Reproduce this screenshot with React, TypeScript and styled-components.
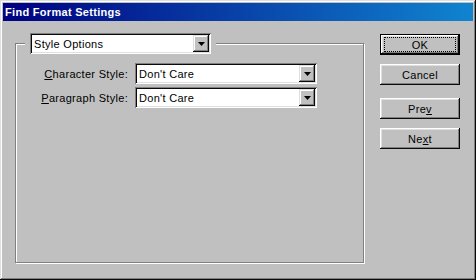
import React, { FC } from 'react'
import styled, { createGlobalStyle } from 'styled-components'

const GlobalStyle = createGlobalStyle`
  html, body {
    margin: 0;
    padding: 0;
    background: #c0c0c0;
  }
  body {
    font-family: "Liberation Sans", Arial, sans-serif;
    font-size: 11px;
    letter-spacing: 0.3px;
  }
`

const Arrow = () => (
  <svg width="7" height="4" viewBox="0 0 7 4">
    <path d="M0 0h7L3.5 4z" fill="#000" />
  </svg>
)

type ComboProps = { value: string; width: number }

const Combo: FC<ComboProps> = ({ value, width }) => (
  <ComboBox $width={width}>
    <ComboText>{value}</ComboText>
    <ComboButton>
      <Arrow />
    </ComboButton>
  </ComboBox>
)

type ButtonProps = { isDefault?: boolean; children: React.ReactNode }

const Button: FC<ButtonProps> = ({ isDefault, children }) => (
  <PushButton $default={isDefault}>
    {isDefault ? <Focus>{children}</Focus> : children}
  </PushButton>
)

export default function App() {
  return (
    <>
      <GlobalStyle />
      <Window>
        <TitleBar>Find Format Settings</TitleBar>
        <Content>
          <Group>
            <GroupHeader>
              <Combo value="Style Options" width={181} />
            </GroupHeader>
            <Fields>
              <Label>
                <U>C</U>haracter Style:
              </Label>
              <Combo value="Don't Care" width={182} />
              <Label>
                <U>P</U>aragraph Style:
              </Label>
              <Combo value="Don't Care" width={182} />
            </Fields>
          </Group>
          <Buttons>
            <Button isDefault>OK</Button>
            <Button>Cancel</Button>
            <Spacer />
            <Button>
              Pre<U>v</U>
            </Button>
            <Button>
              Ne<U>x</U>t
            </Button>
          </Buttons>
        </Content>
      </Window>
    </>
  )
}

const Window = styled.div`
  box-sizing: border-box;
  width: 476px;
  height: 280px;
  padding: 3px;
  background: #c0c0c0;
  box-shadow: inset -1px -1px #0a0a0a, inset 1px 1px #dfdfdf,
    inset -2px -2px #808080, inset 2px 2px #fff;
  display: flex;
  flex-direction: column;
`

const TitleBar = styled.div`
  height: 18px;
  padding-left: 2px;
  display: flex;
  align-items: center;
  background: linear-gradient(90deg, #000080, #1084d0);
  color: #fff;
  font-weight: bold;
  font-size: 11px;
  letter-spacing: 0.3px;
`

const Content = styled.div`
  display: flex;
  align-items: flex-start;
  padding: 12px 0 0 12px;
`

const Group = styled.div`
  box-sizing: border-box;
  width: 349px;
  height: 220px;
  margin-top: 10px;
  border: 1px solid #808080;
  box-shadow: 1px 1px 0 #fff, inset 1px 1px 0 #fff;
  display: flex;
  flex-direction: column;
`

const GroupHeader = styled.div`
  align-self: flex-start;
  margin: -11px 0 0 9px;
  padding: 0 5px;
  background: #c0c0c0;
`

const Fields = styled.div`
  display: grid;
  grid-template-columns: 98px auto;
  column-gap: 7px;
  row-gap: 3px;
  align-items: center;
  margin: 9px 0 0 14px;
`

const Label = styled.span`
  justify-self: end;
  color: #000;
  white-space: nowrap;
`

const U = styled.span`
  text-decoration: underline;
`

const ComboBox = styled.div<{ $width: number }>`
  box-sizing: border-box;
  width: ${({ $width }) => $width}px;
  height: 21px;
  padding: 2px;
  background: #fff;
  display: flex;
  align-items: stretch;
  box-shadow: inset 1px 1px #808080, inset -1px -1px #fff,
    inset 2px 2px #0a0a0a, inset -2px -2px #dfdfdf;
`

const ComboText = styled.span`
  flex: 1;
  display: flex;
  align-items: center;
  padding-left: 2px;
  color: #000;
`

const ComboButton = styled.span`
  width: 16px;
  display: flex;
  align-items: center;
  justify-content: center;
  background: #c0c0c0;
  box-shadow: inset -1px -1px #0a0a0a, inset 1px 1px #dfdfdf,
    inset -2px -2px #808080, inset 2px 2px #fff;
`

const Buttons = styled.div`
  display: flex;
  flex-direction: column;
  gap: 9px;
  margin: 1px 0 0 16px;
`

const Spacer = styled.div`
  height: 4px;
  margin-top: -9px;
`

const PushButton = styled.div<{ $default?: boolean }>`
  box-sizing: border-box;
  width: 80px;
  height: 21px;
  display: flex;
  align-items: center;
  justify-content: center;
  background: #c0c0c0;
  color: #000;
  box-shadow: inset -1px -1px #0a0a0a, inset 1px 1px #fff,
    inset -2px -2px #808080, inset 2px 2px #dfdfdf;
  ${({ $default }) => ($default ? 'border: 1px solid #000;' : '')}
`

const Focus = styled.span`
  box-sizing: border-box;
  width: 70px;
  height: 13px;
  display: flex;
  align-items: center;
  justify-content: center;
  outline: 1px dotted #000;
`
